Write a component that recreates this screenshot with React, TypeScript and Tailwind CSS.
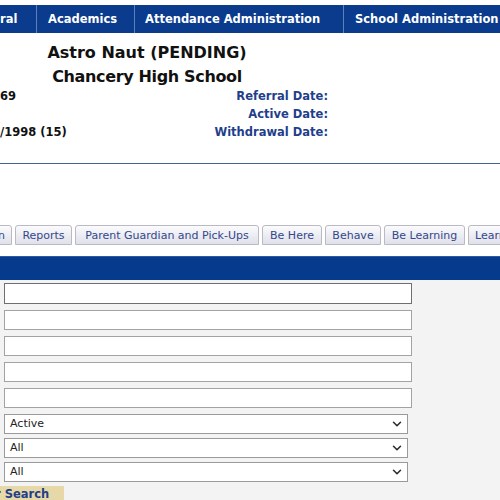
import { ChevronDown } from 'lucide-react';

const navItems = [
  { label: 'ral', width: 'w-[36px]', pad: 'pl-0' },
  { label: 'Academics', width: 'w-[98px]', pad: 'pl-[11px]' },
  { label: 'Attendance Administration', width: 'w-[209px]', pad: 'pl-[10px]' },
  { label: 'School Administration', width: 'w-[170px]', pad: 'pl-[11px]' },
];

const tabs = [
  { label: 'n', width: 'w-[40px] -ml-[28px] text-right pr-[6px]' },
  { label: 'Reports', width: 'w-[57px]' },
  { label: 'Parent Guardian and Pick-Ups', width: 'w-[184px]' },
  { label: 'Be Here', width: 'w-[60px]' },
  { label: 'Behave', width: 'w-[56px]' },
  { label: 'Be Learning', width: 'w-[81px]' },
  { label: 'Learning Plan', width: 'w-[90px] text-left pl-[6px]' },
];

const infoRows = [
  { left: '69', label: 'Referral Date:' },
  { left: '', label: 'Active Date:' },
  { left: '/1998 (15)', label: 'Withdrawal Date:' },
];

function Select({ value }: { value: string }) {
  return (
    <div className="relative ml-[4px] w-[404px] h-[20px]">
      <div className="h-full bg-white border border-[#9a9a9a] pl-[5px] text-[11px] leading-[18px] text-[#222]">
        {value}
      </div>
      <ChevronDown
        size={14}
        strokeWidth={2.6}
        className="absolute right-[4px] top-[3px] text-[#2a2a2a]"
      />
    </div>
  );
}

export default function App() {
  return (
    <div className="w-[500px] h-[500px] overflow-hidden bg-white font-['DejaVu_Sans',Verdana,sans-serif]">
      {/* Top menu */}
      <div className="pt-[5px]">
        <div className="flex h-[28px] bg-[#0a3b8d] text-white font-bold text-[11.5px] whitespace-nowrap">
          {navItems.map((item, i) => (
            <div
              key={item.label}
              className={`${item.width} ${item.pad} pt-[2px] shrink-0 flex items-center ${i > 0 ? 'border-l border-[#5f7fba]' : ''}`}
            >
              {item.label}
            </div>
          ))}
        </div>
      </div>

      {/* Student header */}
      <div className="mt-[8px] w-[294px] text-center font-bold text-[16px] text-[#111]">
        <div className="leading-[24px]">Astro Naut (PENDING)</div>
        <div className="leading-[23px] tracking-[-0.35px]">Chancery High School</div>
      </div>

      <div className="text-[11.5px] font-bold">
        {infoRows.map(row => (
          <div key={row.label} className="flex h-[18px] items-center">
            <div className="w-[200px] text-[#111]">{row.left}</div>
            <div className="w-[128px] text-right text-[#1f3f8c]">{row.label}</div>
          </div>
        ))}
      </div>

      <div className="mt-[21px] h-px bg-[#40648f]" />

      {/* Tabs */}
      <div className="mt-[61px] flex gap-[3px] h-[20px] whitespace-nowrap text-[11px] text-[#34478a]">
        {tabs.map(tab => (
          <div
            key={tab.label}
            className={`${tab.width} shrink-0 text-center leading-[19px] border border-[#b9bac4] rounded-t-[3px] bg-gradient-to-b from-[#fbfbfd] to-[#dfe0ea] overflow-hidden`}
          >
            {tab.label}
          </div>
        ))}
      </div>

      <div className="mt-[11px] h-[24px] bg-[#053a8c] border-t border-[#2f5aa0]" />

      {/* Search form */}
      <div className="bg-[#f3f3f3] h-[300px] pt-[3px]">
        <div className="flex flex-col gap-[6px]">
          <div className="ml-[4px] w-[408px] h-[21px] bg-white border border-[#6f6f6f]" />
          <div className="ml-[4px] w-[408px] h-[20px] bg-white border border-[#a3a3a3]" />
          <div className="ml-[4px] w-[408px] h-[20px] bg-white border border-[#a3a3a3]" />
          <div className="ml-[4px] w-[408px] h-[20px] bg-white border border-[#a3a3a3]" />
          <div className="ml-[4px] w-[408px] h-[20px] bg-white border border-[#a3a3a3]" />
        </div>
        <div className="mt-[6px] flex flex-col gap-[4px]">
          <Select value="Active" />
          <Select value="All" />
          <Select value="All" />
        </div>
        <div className="mt-[4px] -ml-[9px] w-[73px] h-[18px] bg-[#e6d9a7] pl-[4px] text-[11.5px] font-bold leading-[16px] text-[#1f3f8c] whitespace-nowrap">
          r Search
        </div>
      </div>
    </div>
  );
}
